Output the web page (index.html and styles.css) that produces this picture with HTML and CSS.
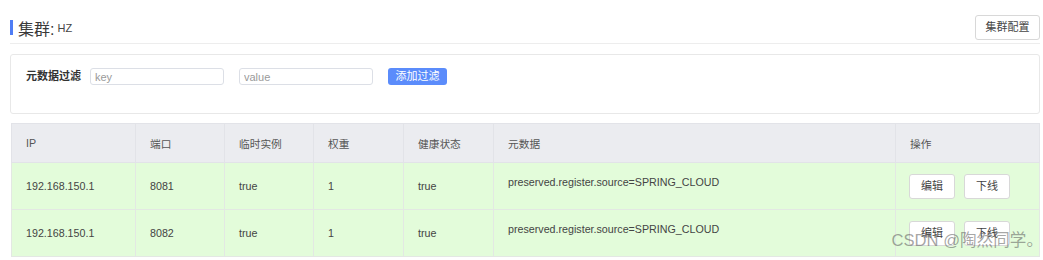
FILE: index.html
```html
<!DOCTYPE html>
<html lang="zh-CN">
<head>
  <meta charset="UTF-8">
  <title>集群 HZ</title>
  <link rel="stylesheet" href="styles.css">
</head>
<body>
  <div class="page">

    <!-- Cluster header -->
    <div class="cluster-head">
      <div class="cluster-title">
        <span class="bar"></span>
        <span class="title-label">集群:</span>
        <span class="title-name">HZ</span>
      </div>
      <button class="btn btn-plain btn-config">集群配置</button>
    </div>

    <!-- Metadata filter -->
    <div class="filter-card">
      <span class="filter-label">元数据过滤</span>
      <input class="filter-input" type="text" placeholder="key">
      <input class="filter-input" type="text" placeholder="value">
      <button class="btn btn-primary">添加过滤</button>
    </div>

    <!-- Instance table -->
    <table class="instance-table">
      <colgroup>
        <col style="width:124px">
        <col style="width:89px">
        <col style="width:89px">
        <col style="width:90px">
        <col style="width:90px">
        <col style="width:402px">
        <col>
      </colgroup>
      <thead>
        <tr>
          <th>IP</th>
          <th>端口</th>
          <th>临时实例</th>
          <th>权重</th>
          <th>健康状态</th>
          <th>元数据</th>
          <th>操作</th>
        </tr>
      </thead>
      <tbody>
        <tr>
          <td>192.168.150.1</td>
          <td>8081</td>
          <td>true</td>
          <td>1</td>
          <td>true</td>
          <td class="meta">preserved.register.source=SPRING_CLOUD</td>
          <td class="ops">
            <button class="btn btn-plain">编辑</button>
            <button class="btn btn-plain">下线</button>
          </td>
        </tr>
        <tr>
          <td>192.168.150.1</td>
          <td>8082</td>
          <td>true</td>
          <td>1</td>
          <td>true</td>
          <td class="meta">preserved.register.source=SPRING_CLOUD</td>
          <td class="ops">
            <button class="btn btn-plain">编辑</button>
            <button class="btn btn-plain">下线</button>
          </td>
        </tr>
      </tbody>
    </table>

    <div class="watermark">CSDN @陶然同学。</div>
  </div>
</body>
</html>
```

FILE: styles.css
```css
body {
  margin: 0;
  background: #fff;
  font-family: "Liberation Sans", "Noto Sans CJK SC", sans-serif;
  color: #333;
  font-size: 10.7px;
}

.page {
  position: relative;
  width: 1030px;
  margin-left: 10px;
  padding-top: 15px;
}

/* header */
.cluster-head {
  display: flex;
  justify-content: space-between;
  align-items: center;
  padding-bottom: 3px;
  border-bottom: 1px solid #ededed;
}

.cluster-title {
  display: flex;
  align-items: center;
  gap: 3px;
}

.bar {
  width: 3px;
  height: 15px;
  background: #4f7df5;
  margin-right: 2px;
}

.title-label {
  font-size: 16px;
  color: #3a3a3a;
}

.title-name {
  font-size: 11px;
  color: #444;
}

.btn {
  font-family: inherit;
  font-size: 11px;
  cursor: pointer;
  border-radius: 3px;
  line-height: 1;
}

.btn-plain {
  background: #fff;
  color: #444;
  border: 1px solid #d8d8d8;
  padding: 6px 10px;
}

.btn-config {
  width: 65px;
  height: 25px;
  padding: 0;
}

.btn-primary {
  background: #5b8cfb;
  color: #fff;
  border: none;
  width: 59px;
  height: 17px;
  padding: 0;
}

/* filter */
.filter-card {
  margin-top: 10px;
  height: 60px;
  border: 1px solid #e8e8e8;
  border-radius: 3px;
  display: flex;
  align-items: flex-start;
  padding: 13px 0 0 15px;
  box-sizing: border-box;
}

.filter-label {
  font-weight: bold;
  font-size: 11px;
  color: #333;
  line-height: 17px;
  margin-right: 9px;
}

.filter-input {
  width: 134px;
  height: 17px;
  box-sizing: border-box;
  border: 1px solid #dcdfe6;
  border-radius: 3px;
  padding: 0 4px;
  font-family: inherit;
  font-size: 11px;
  margin-right: 15px;
  outline: none;
}

.filter-input::placeholder {
  color: #9a9a9a;
}

/* table */
.instance-table {
  margin-top: 9px;
  margin-left: 1px;
  width: 1029px;
  border-collapse: collapse;
  table-layout: fixed;
}

.instance-table th,
.instance-table td {
  border: 1px solid #e3e8e3;
  text-align: left;
  padding: 0 0 0 14px;
  font-weight: normal;
  color: #444;
}

.instance-table th {
  background: #ebecf0;
  height: 38px;
  border-color: #e2e3e8;
  color: #555;
}

.instance-table td {
  background: #e3fcda;
  height: 46px;
}

.instance-table td.meta {
  vertical-align: top;
  padding-top: 13px;
  height: 33px;
}

.instance-table td.ops {
  padding-left: 13px;
}

.ops .btn-plain {
  width: 46px;
  height: 25px;
  padding: 0;
  margin-right: 6px;
}

/* overlay watermark */
.watermark {
  position: absolute;
  right: -3px;
  top: 227px;
  font-size: 16.6px;
  color: rgba(90, 90, 90, 0.55);
}
```
